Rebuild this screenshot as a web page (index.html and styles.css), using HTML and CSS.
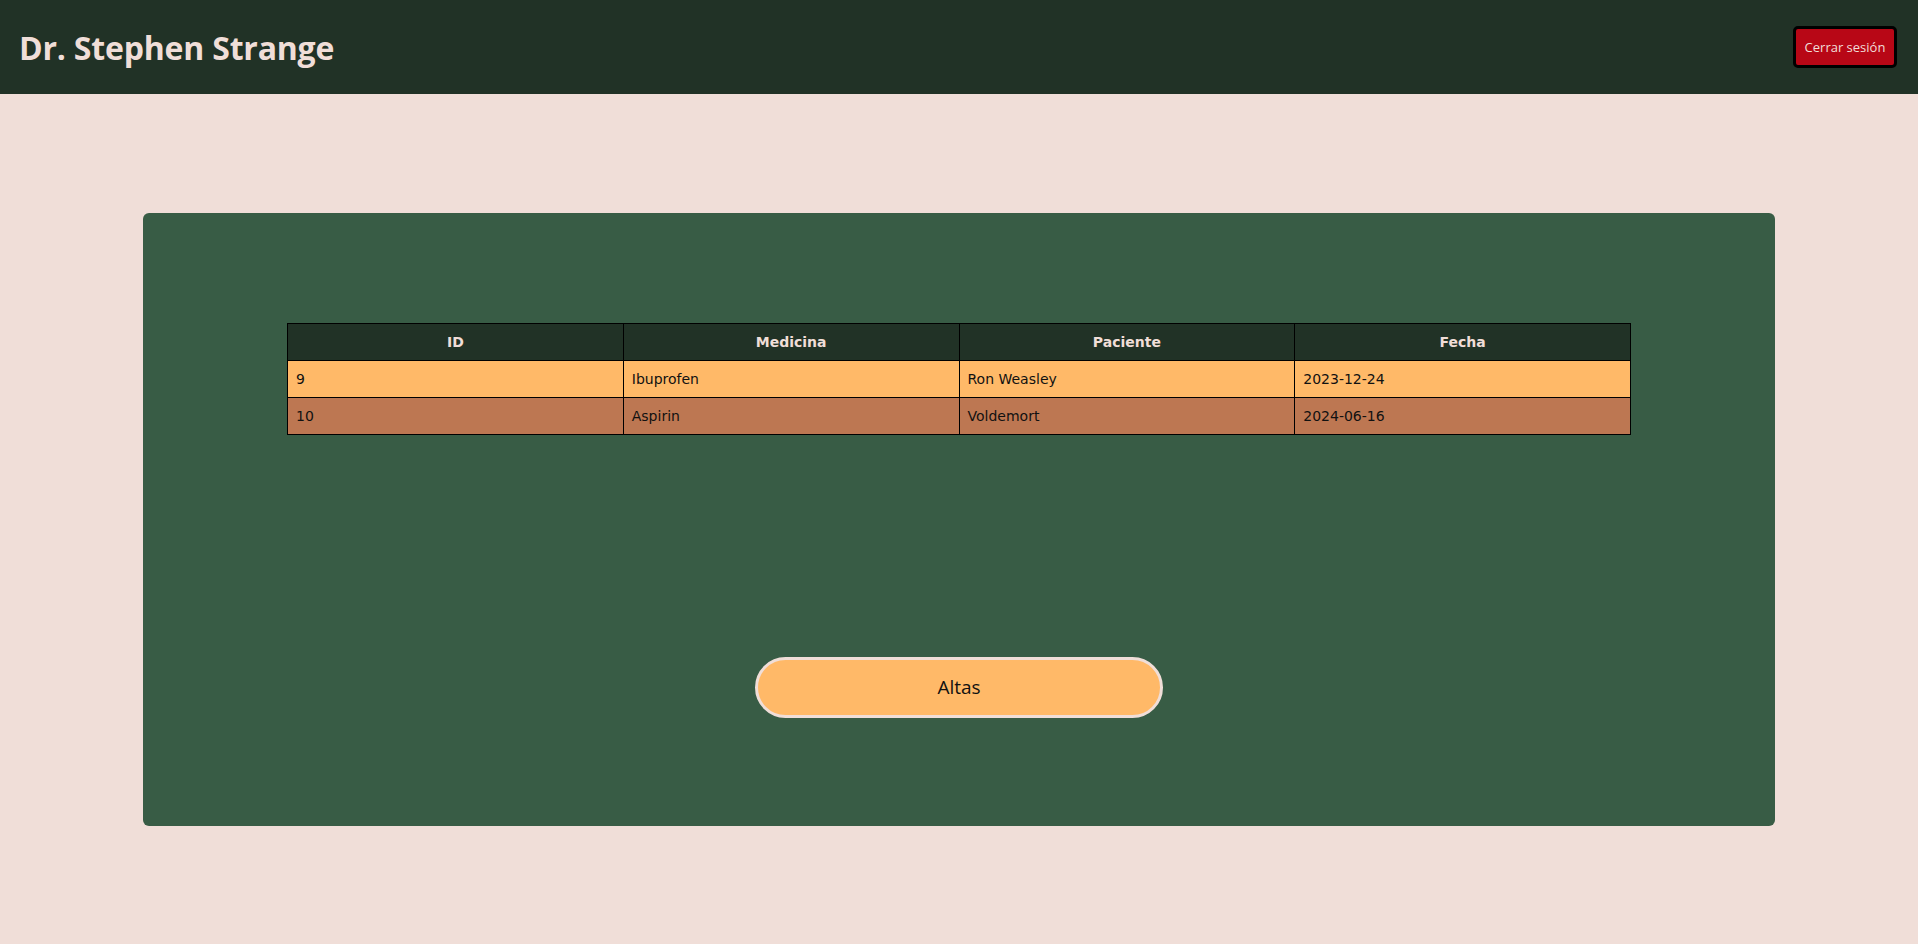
FILE: index.html
```html
<!DOCTYPE html>
<html lang="es">
<head>
<meta charset="utf-8">
<title>Altas</title>
<link rel="stylesheet" href="styles.css">
</head>
<body>
<header class="topbar">
  <h1 class="doctor">Dr. Stephen Strange</h1>
  <button class="logout">Cerrar sesión</button>
</header>
<main class="content">
  <section class="card">
    <table class="records">
      <thead>
        <tr><th>ID</th><th>Medicina</th><th>Paciente</th><th>Fecha</th></tr>
      </thead>
      <tbody>
        <tr class="odd"><td>9</td><td>Ibuprofen</td><td>Ron Weasley</td><td>2023-12-24</td></tr>
        <tr class="even"><td>10</td><td>Aspirin</td><td>Voldemort</td><td>2024-06-16</td></tr>
      </tbody>
    </table>
    <button class="altas">Altas</button>
  </section>
</main>
</body>
</html>
```
FILE: styles.css
```css
* { box-sizing: border-box; }
html, body { margin: 0; height: 100%; }
body {
  background: #f0ded8;
  font-family: "Open Sans", "Noto Sans", sans-serif;
  display: flex;
  flex-direction: column;
  min-height: 944px;
}
.topbar {
  height: 94px;
  flex: none;
  background: #213226;
  display: flex;
  align-items: center;
  justify-content: space-between;
  padding: 0 21px 0 19px;
}
.doctor {
  margin: 0;
  color: #f0ded8;
  font-family: "Open Sans", sans-serif;
  font-weight: 700;
  font-size: 32px;
  letter-spacing: -0.2px;
}
.logout {
  width: 104px;
  height: 42px;
  background: #b80716;
  color: #f0ded8;
  border: 3px solid #000;
  border-radius: 5px;
  font-family: "Open Sans", sans-serif;
  font-size: 13px;
  padding: 0;
}
.content {
  flex: 1;
  display: flex;
  align-items: center;
  justify-content: center;
}
.card {
  width: 1632px;
  height: 613px;
  background: #385c45;
  border-radius: 6px;
  padding: 110px 0 0;
  display: flex;
  flex-direction: column;
  align-items: center;
}
.records {
  width: 1344px;
  border-collapse: collapse;
  table-layout: fixed;
  font-family: "DejaVu Sans", sans-serif;
  font-size: 14px;
}
.records th, .records td {
  border: 1px solid #000;
  height: 37px;
  padding: 0 8px;
}
.records th {
  background: #213226;
  color: #f0ded8;
  font-weight: 700;
  font-size: 14px;
  text-align: center;
}
.records td { color: #111; text-align: left; }
.odd { background: #ffb968; }
.even { background: #bd7752; }
.altas {
  margin-top: 222px;
  width: 408px;
  height: 61px;
  background: #ffb968;
  border: 3px solid #f0ded8;
  border-radius: 31px;
  font-family: "Open Sans", sans-serif;
  font-size: 19px;
  color: #111;
}
```
